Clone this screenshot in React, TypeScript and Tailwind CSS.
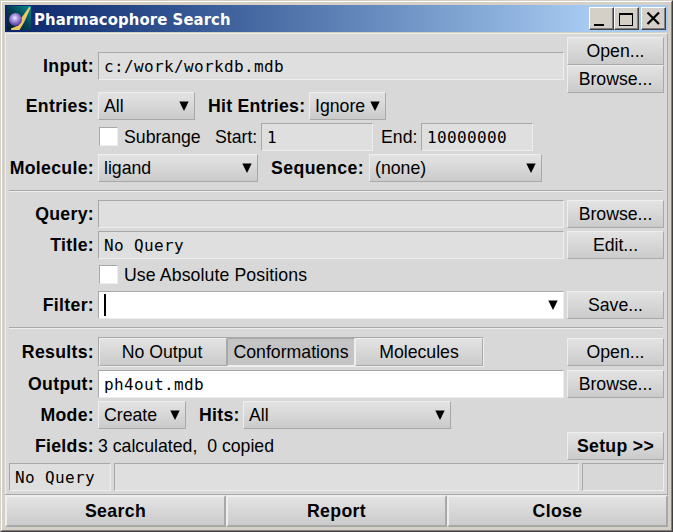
import type { ReactNode } from "react";

const raised = "border border-t-[#eeeeee] border-l-[#eeeeee] border-r-[#a8a8a8] border-b-[#a8a8a8] bg-linear-to-b from-[#e3e3e3] to-[#cbcbcb]";
const sunken = "border border-t-[#a8a8a8] border-l-[#a8a8a8] border-r-[#eeeeee] border-b-[#eeeeee]";
const mono = "font-['DejaVu_Sans_Mono',monospace] text-[16px] tracking-[0.37px]";

function Label({ children }: { children: ReactNode }) {
  return <div className="mr-1 w-[88px] shrink-0 text-right font-bold tracking-[0.3px] leading-7">{children}</div>;
}

function Arrow() {
  return (
    <svg className="shrink-0" width="10" height="10" viewBox="0 0 10 10">
      <path d="M0.3 0.5H9.7L5 10Z" fill="#000" />
    </svg>
  );
}

function Button({ children, className = "w-[97px]" }: { children: ReactNode; className?: string }) {
  return (
    <button className={`flex h-7 shrink-0 items-center justify-center whitespace-nowrap ${raised} ${className}`}>
      {children}
    </button>
  );
}

function Select({ children, className }: { children: ReactNode; className: string }) {
  return (
    <button className={`flex h-7 shrink-0 items-center justify-between pr-[5px] pl-[5px] ${raised} ${className}`}>
      <span>{children}</span>
      <Arrow />
    </button>
  );
}

function Field({ children, className = "w-[466px] bg-[#dfdfdf] pt-[2px]" }: { children?: ReactNode; className?: string }) {
  return (
    <div className={`flex h-7 shrink-0 items-center pl-[5px] whitespace-pre ${sunken} ${mono} ${className}`}>{children}</div>
  );
}

function Row({ children, className = "h-7" }: { children: ReactNode; className?: string }) {
  return <div className={`flex shrink-0 items-start leading-[26px] ${className}`}>{children}</div>;
}

function Checkbox() {
  return <div className={`ml-px h-[19px] w-[19px] shrink-0 bg-white ${sunken}`} />;
}

function Separator() {
  return <div className="mt-2 mr-1 mb-2 ml-[3px] h-[2px] shrink-0 border-t border-b border-t-[#a8a8a8] border-b-[#eeeeee]" />;
}

function WindowButton({ children, className = "" }: { children: ReactNode; className?: string }) {
  return (
    <div
      className={`h-[23px] w-[25px] border border-t-white border-l-white border-r-[#404040] border-b-[#404040] bg-[#d4d0c8] ${className}`}
    >
      <div className="h-full w-full border-r border-b border-[#808080]">{children}</div>
    </div>
  );
}

function AppIcon() {
  return (
    <svg className="shrink-0" width="24" height="24" viewBox="0 0 24 24">
      <defs>
        <linearGradient id="sea" x1="0" y1="1" x2="1" y2="0">
          <stop offset="0" stopColor="#021c2c" />
          <stop offset="0.5" stopColor="#053f50" />
          <stop offset="1" stopColor="#008f94" />
        </linearGradient>
        <radialGradient id="ball" cx="0.45" cy="0.38" r="0.62">
          <stop offset="0" stopColor="#f0eaff" />
          <stop offset="0.4" stopColor="#aa94df" />
          <stop offset="1" stopColor="#54359a" />
        </radialGradient>
      </defs>
      <rect width="24" height="24" fill="url(#sea)" />
      <path d="M22.5 0.5L14 12.5L11.5 19.5L4 22.5V24H12.5L17 16.5L23.5 2Z" fill="#efc765" />
      <circle cx="8.5" cy="13.5" r="6.5" fill="url(#ball)" />
    </svg>
  );
}

export default function App() {
  return (
    <div className="flex h-[532px] w-[673px] flex-col overflow-hidden border border-t-[#d4d0c8] border-l-[#d4d0c8] border-r-[#404040] border-b-[#404040] font-['Liberation_Sans',Arial,sans-serif] text-[17.7px] text-black">
      <div className="flex h-full flex-col border border-t-white border-l-white border-r-[#808080] border-b-[#808080] bg-[#d4d0c8] p-[3px]">
        <div className="mb-px flex h-[27px] shrink-0 items-start bg-linear-to-r from-[#0a246a] to-[#a6caf0] to-[88%] pt-[2px] pr-[2px] pl-[2px]">
          <div className="-mt-px h-6">
            <AppIcon />
          </div>
          <div className="ml-[3px] flex-1 font-['DejaVu_Sans_Condensed','DejaVu_Sans',sans-serif] text-[16.5px] leading-[25px] font-bold tracking-[0.1px] whitespace-nowrap text-white">
            Pharmacophore Search
          </div>
          <WindowButton>
            <div className="ml-1 h-full pt-[16px]">
              <div className="h-[2px] w-[10px] bg-black" />
            </div>
          </WindowButton>
          <WindowButton className="mr-[2px]">
            <div className="h-full pt-[5px] pl-1">
              <div className="h-[13px] w-[14px] border border-t-2 border-black" />
            </div>
          </WindowButton>
          <WindowButton>
            <svg width="22" height="20" viewBox="0 0 22 20">
              <path d="M5.5 4.5L17 16M17 4.5L5.5 16" stroke="#000" strokeWidth="2.2" fill="none" />
            </svg>
          </WindowButton>
        </div>

        <div className="flex h-[494px] shrink-0 flex-col border-t border-r border-l border-t-[#eeeeee] border-r-[#a8a8a8] border-l-[#eeeeee] bg-[#d8d8d8] pt-[3px]">
          <Row className="h-[55px]">
            <div className="mt-[15px] flex">
              <Label>Input:</Label>
              <Field>c:/work/workdb.mdb</Field>
            </div>
            <div className="ml-[3px]">
              <Button>Open...</Button>
              <Button>Browse...</Button>
            </div>
          </Row>

          <Row className="h-[31px]">
            <Label>Entries:</Label>
            <Select className="w-[97px]">All</Select>
            <div className="w-[114px] pl-[13px] leading-7 font-bold tracking-[0.25px] whitespace-nowrap">Hit Entries:</div>
            <Select className="w-[77px]">Ignore</Select>
          </Row>

          <Row className="h-[31px]">
            <Label>{""}</Label>
            <div className="pt-1">
              <Checkbox />
            </div>
            <div className="w-[91px] pl-[6px] leading-7">Subrange</div>
            <div className="w-[52px] pl-[6px] leading-7">Start:</div>
            <Field className="w-[112px] bg-[#dfdfdf] pt-[2px]">1</Field>
            <div className="w-[48px] pl-[8px] leading-7">End:</div>
            <Field className="w-[112px] bg-[#dfdfdf] pt-[2px]">10000000</Field>
          </Row>

          <Row>
            <Label>Molecule:</Label>
            <Select className="w-[160px]">ligand</Select>
            <div className="w-[111px] pl-[13px] leading-7 font-bold tracking-[0.4px]">Sequence:</div>
            <Select className="w-[173px]">(none)</Select>
          </Row>

          <Separator />

          <Row className="h-[31px]">
            <Label>Query:</Label>
            <Field />
            <Button className="ml-[3px] w-[97px]">Browse...</Button>
          </Row>
          <Row className="h-[31px]">
            <Label>Title:</Label>
            <Field>No Query</Field>
            <Button className="ml-[3px] w-[97px]">Edit...</Button>
          </Row>
          <Row className="h-[29px]">
            <Label>{""}</Label>
            <div className="pt-[3px]">
              <Checkbox />
            </div>
            <div className="pl-[6px] tracking-[0.1px]">Use Absolute Positions</div>
          </Row>
          <Row>
            <Label>Filter:</Label>
            <Field className="w-[466px] justify-between bg-white pr-[5px]">
              <span className="h-[22px] w-[2px] bg-black" />
              <Arrow />
            </Field>
            <Button className="ml-[3px] w-[97px]">Save...</Button>
          </Row>

          <Separator />

          <Row className="h-[33px]">
            <div className="pt-px">
              <Label>Results:</Label>
            </div>
            <div className={`mr-[83px] flex h-[30px] w-[386px] shrink-0 ${sunken}`}>
              <Button className="w-[128px] pr-[2px]">No Output</Button>
              <div className={`flex h-7 w-[128px] shrink-0 items-center justify-center bg-[#c4c4c4] ${sunken}`}>Conformations</div>
              <Button className="w-[128px]">Molecules</Button>
            </div>
            <div className="pt-px">
              <Button>Open...</Button>
            </div>
          </Row>
          <Row className="h-[31px]">
            <Label>Output:</Label>
            <Field className="w-[466px] bg-white pt-[2px]">ph4out.mdb</Field>
            <Button className="ml-[3px] w-[97px]">Browse...</Button>
          </Row>
          <Row className="h-[31px]">
            <Label>Mode:</Label>
            <Select className="w-[88px]">Create</Select>
            <div className="w-[57px] pl-[13px] leading-7 font-bold tracking-[0.3px]">Hits:</div>
            <Select className="w-[208px]">All</Select>
          </Row>
          <Row className="h-[31px]">
            <Label>Fields:</Label>
            <div className="w-[469px] leading-7 whitespace-pre">3 calculated,  0 copied</div>
            <Button className="w-[97px] font-bold tracking-[0.3px]">Setup &gt;&gt;</Button>
          </Row>
          <Row className="h-[31px] gap-[3px] pl-[3px]">
            <Field className="w-[102px] bg-[#dfdfdf] pt-[2px]">No Query</Field>
            <Field className="w-[465px] bg-[#dfdfdf]" />
            <Field className="w-[82px] bg-[#d8d8d8]" />
          </Row>

          <div className="-mr-px -ml-px flex h-[33px] shrink-0 border-t border-[#a8a8a8] font-bold tracking-[0.35px]">
            {["Search", "Report", "Close"].map((text) => (
              <button
                key={text}
                className="flex h-8 w-[221px] items-center justify-center border-t-2 border-r-2 border-b-2 border-l-2 border-t-[#eeeeee] border-r-[#a8a8a8] border-b-[#a8a8a8] border-l-[#eeeeee] bg-linear-to-b from-[#e3e3e3] to-[#cbcbcb]"
              >
                {text}
              </button>
            ))}
          </div>
        </div>
      </div>
    </div>
  );
}
